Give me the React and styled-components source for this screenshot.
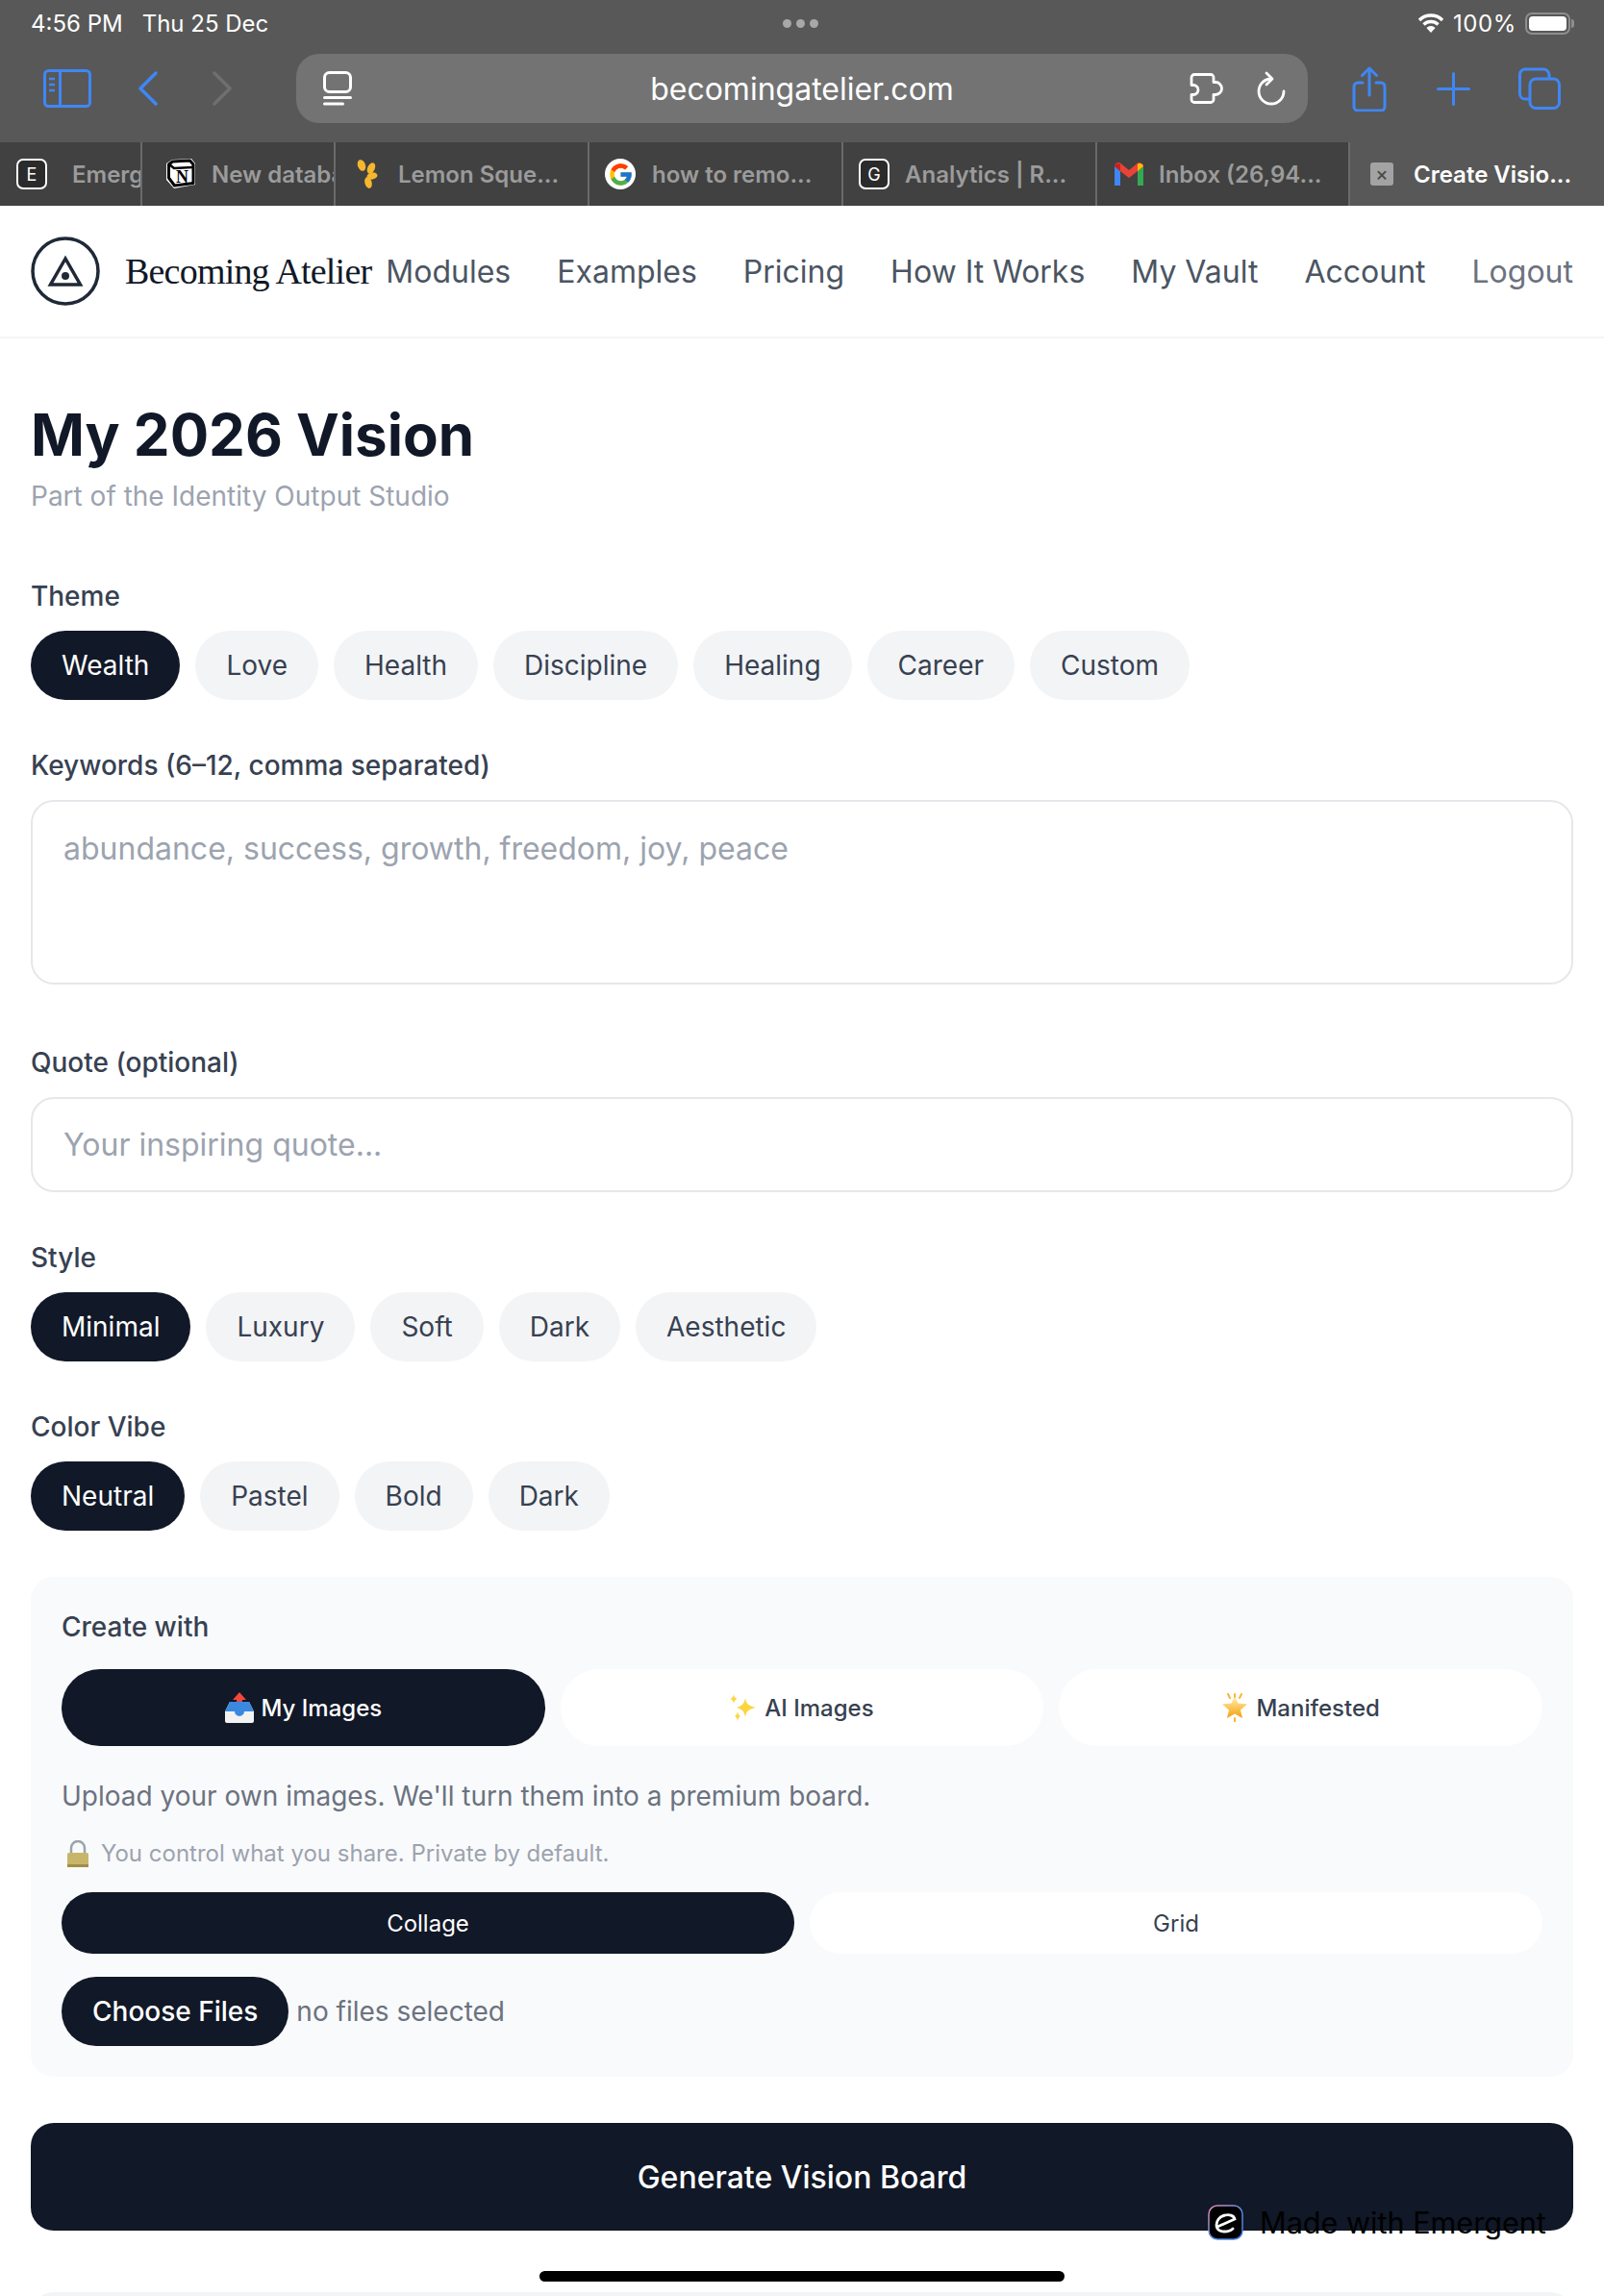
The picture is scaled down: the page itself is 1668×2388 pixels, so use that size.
import React from "react";
import styled, { createGlobalStyle } from "styled-components";
import { FcGoogle } from "react-icons/fc";

const Global = createGlobalStyle`
    * { box-sizing: border-box; }
    html, body { margin: 0; padding: 0; background: #fff; }
    body { font-family: Inter, "Liberation Sans", sans-serif; }
`

const Screen = styled.div`
    position: relative;
    width: 1668px;
    height: 2388px;
    overflow: hidden;
    background: #fff;
`

/* safari chrome */
const Chrome = styled.div`
    background: #585858;
    height: 148px;
`
const StatusBar = styled.div`
    display: grid;
    grid-template-columns: 1fr auto 1fr;
    align-items: center;
    height: 48px;
    padding: 0 35px 0 32px;
    color: #fff;
    font-size: 24px;
`
const StatusLeft = styled.div`
    display: flex;
    gap: 20px;
`
const StatusRight = styled.div`
    display: flex;
    align-items: center;
    justify-content: flex-end;
    gap: 9px;
`
const BatteryLevel = styled.span`
    letter-spacing: 0.6px;
`
const Dots = styled.div`
    display: flex;
    gap: 5px;
    i {
        width: 9px;
        height: 9px;
        border-radius: 50%;
        background: #a8a8a8;
    }
`
const Battery = styled.div`
    position: relative;
    width: 47px;
    height: 23px;
    border: 2px solid #8e8e8e;
    border-radius: 7px;
    padding: 2px;
    &::before {
        content: "";
        display: block;
        height: 100%;
        border-radius: 4px;
        background: #fff;
    }
    &::after {
        content: "";
        position: absolute;
        right: -6px;
        top: 5px;
        width: 3px;
        height: 9px;
        border-radius: 0 3px 3px 0;
        background: #8e8e8e;
    }
`
const ToolRow = styled.div`
    display: flex;
    align-items: center;
    height: 72px;
    margin-top: 8px;
    padding-left: 45px;
`
const Tool = styled.span`
    display: flex;
    flex: none;
    margin-left: ${p => p.$gap || 0}px;
`
const UrlBar = styled.div`
    display: grid;
    grid-template-columns: 1fr auto 1fr;
    align-items: center;
    flex: none;
    width: 1052px;
    height: 72px;
    margin-left: 67px;
    padding: 0 23px;
    border-radius: 24px;
    background: #737373;
    color: #fff;
    font-size: 32px;
`
const UrlActions = styled.div`
    display: flex;
    justify-content: flex-end;
    align-items: center;
    gap: 29px;
`
const TabBar = styled.div`
    display: flex;
    height: 66px;
    background: #414141;
`
const Tab = styled.div`
    display: flex;
    align-items: center;
    flex: none;
    width: ${p => p.$w}px;
    padding-left: ${p => p.$pad}px;
    border-right: ${p => p.$active ? "none" : "2px solid #6a6a6a"};
    background: ${p => p.$active ? "#585858" : "transparent"};
    overflow: hidden;
`
const TabIcon = styled.span`
    display: flex;
    align-items: center;
    justify-content: center;
    flex: none;
    width: ${p => p.$w || 32}px;
    margin-right: ${p => p.$gap}px;
`
const TabTitle = styled.span`
    padding-top: 1px;
    color: ${p => p.$active ? "#fff" : "#9b9b9b"};
    font-size: 24px;
    font-weight: 600;
    white-space: nowrap;
`
const SquareFav = styled.span`
    display: flex;
    align-items: center;
    justify-content: center;
    width: 32px;
    height: 32px;
    border: 2px solid #fff;
    border-radius: 7px;
    background: #2b2b2b;
    color: #fff;
    font-size: 18px;
`
const GoogleFav = styled.span`
    display: flex;
    align-items: center;
    justify-content: center;
    width: 32px;
    height: 32px;
    border-radius: 50%;
    background: #fff;
`
const CloseFav = styled.span`
    display: flex;
    align-items: center;
    justify-content: center;
    width: 24px;
    height: 24px;
    border-radius: 3px;
    background: #a3a3a3;
    color: #4a4a4a;
    font-size: 20px;
    font-weight: 500;
`

/* site header */
const Header = styled.header`
    display: flex;
    align-items: center;
    justify-content: space-between;
    height: 138px;
    padding: 0 32px;
    border-bottom: 2px solid #f3f4f6;
`
const Brand = styled.div`
    display: flex;
    align-items: center;
    flex: none;
    gap: 26px;
`
const BrandName = styled.span`
    color: #111827;
    font-family: "Liberation Serif", serif;
    font-size: 38px;
    letter-spacing: -0.8px;
    white-space: nowrap;
`
const Nav = styled.nav`
    display: flex;
    gap: 48px;
`
const NavLink = styled.a`
    padding-top: 2px;
    color: ${p => p.$muted ? "#6b7280" : "#4b5563"};
    font-size: 32px;
    line-height: 48px;
    white-space: nowrap;
`

/* form */
const Main = styled.main`
    padding: 64px 32px 0;
`
const Title = styled.h1`
    margin: 0;
    color: #111827;
    font-size: 60px;
    font-weight: 700;
    line-height: 72px;
`
const Subtitle = styled.p`
    margin: 8px 0 64px;
    color: #9ca3af;
    font-size: 28px;
    line-height: 40px;
`
const Field = styled.section`
    margin-bottom: ${p => p.$after || 48}px;
`
const Label = styled.div`
    margin-bottom: ${p => p.$after || 16}px;
    color: #374151;
    font-size: 28px;
    font-weight: 500;
    line-height: 40px;
`
const Chips = styled.div`
    display: flex;
    gap: 16px;
`
const Chip = styled.div`
    display: flex;
    align-items: center;
    height: 72px;
    padding: 0 32px;
    border-radius: 36px;
    background: ${p => p.$on ? "#111827" : "#f3f4f6"};
    color: ${p => p.$on ? "#fff" : "#374151"};
    font-size: 28px;
`
const TextBox = styled.div`
    height: ${p => p.$h}px;
    padding: ${p => p.$top}px 32px 0;
    border: 2px solid #e5e7eb;
    border-radius: 24px;
    color: #9ca3af;
    font-size: 32px;
    line-height: 48px;
`
const Panel = styled.section`
    margin-bottom: 48px;
    padding: 32px;
    border-radius: 24px;
    background: #f9fafb;
`
const ModeGrid = styled.div`
    display: grid;
    grid-template-columns: repeat(${p => p.$cols}, 1fr);
    gap: 16px;
`
const ModeButton = styled.div`
    display: flex;
    align-items: center;
    justify-content: center;
    gap: 8px;
    height: ${p => p.$h}px;
    border-radius: ${p => p.$h / 2}px;
    background: ${p => p.$on ? "#111827" : "#fff"};
    color: ${p => p.$on ? "#fff" : "#374151"};
    font-size: 24px;
    font-weight: ${p => p.$h === 80 ? 500 : 400};
`
const Hint = styled.p`
    margin: 32px 0 24px;
    color: #6b7280;
    font-size: 28px;
    line-height: 40px;
`
const Privacy = styled.p`
    display: flex;
    align-items: center;
    gap: 12px;
    margin: 0 0 24px;
    padding-left: 5px;
    color: #9ca3af;
    font-size: 24px;
    line-height: 32px;
`
const FileRow = styled.div`
    display: flex;
    align-items: center;
    gap: 8px;
    margin-top: 24px;
`
const FileButton = styled.div`
    display: flex;
    align-items: center;
    height: 72px;
    padding: 0 32px;
    border-radius: 36px;
    background: #111827;
    color: #fff;
    font-size: 28px;
    font-weight: 500;
`
const FileNote = styled.span`
    color: #6b7280;
    font-size: 28px;
`
const Generate = styled.div`
    display: flex;
    align-items: center;
    justify-content: center;
    height: 112px;
    margin-bottom: 64px;
    border-radius: 24px;
    background: #111827;
    color: #fff;
    font-size: 32px;
    font-weight: 500;
`
const NextCard = styled.div`
    height: 60px;
    border-radius: 24px 24px 0 0;
    background: #f3f4f6;
`

/* overlays */
const HomeBar = styled.div`
    position: absolute;
    left: 561px;
    top: 2362px;
    width: 546px;
    height: 11px;
    border-radius: 6px;
    background: #000;
`
const MadeWith = styled.div`
    position: absolute;
    left: 1256px;
    top: 2293px;
    display: flex;
    align-items: center;
    gap: 17px;
    color: #000;
    font-size: 30.6px;
    line-height: 37px;
    white-space: nowrap;
`

const Blue = "#3f87f5"

const SidebarIcon = () =>
    <svg width="50" height="40" viewBox="0 0 50 40" fill="none" stroke={Blue} strokeWidth="3">
        <rect x="1.5" y="1.5" width="47" height="37" rx="4" />
        <path d="M17.5 2v36" />
        <path d="M6 10h6M6 16h6M6 22h6" strokeWidth="2.5" />
    </svg>

const Chevron = ({ color, flip }) =>
    <svg width="20" height="36" viewBox="0 0 20 36" fill="none" stroke={color} strokeWidth="3.5" strokeLinecap="round" strokeLinejoin="round">
        <path d={flip ? "M2 2l16 16-16 16" : "M18 2L2 18l16 16"} />
    </svg>

const ReaderIcon = () =>
    <svg width="30" height="36" viewBox="0 0 30 36" fill="none" stroke="#fff" strokeWidth="3" strokeLinecap="round">
        <rect x="1.5" y="1.5" width="27" height="20" rx="5" />
        <path d="M1.5 27.5h27M1.5 34h19" />
    </svg>

const ExtensionIcon = () =>
    <svg width="41" height="32" viewBox="0 0 41 32" fill="none" stroke="#fff" strokeWidth="2.8" strokeLinejoin="round">
        <path d="M5 1.5h17a3 3 0 0 1 3 3v5h2a6.5 6.5 0 0 1 0 13h-2v5a3 3 0 0 1-3 3H5a3 3 0 0 1-3-3v-5h2a5 5 0 0 0 0-10H2V4.5a3 3 0 0 1 3-3z" />
    </svg>

const ReloadIcon = () =>
    <svg width="30" height="36" viewBox="0 0 30 36" fill="none" stroke="#fff" strokeWidth="2.8" strokeLinecap="round" strokeLinejoin="round">
        <path d="M15 8A13 13 0 1 0 28 21" />
        <path d="M10 2l6 6-6 6" />
    </svg>

const ShareIcon = () =>
    <svg width="36" height="47" viewBox="0 0 36 47" fill="none" stroke={Blue} strokeWidth="3" strokeLinecap="round" strokeLinejoin="round">
        <path d="M11 17H6a4 4 0 0 0-4 4v21a4 4 0 0 0 4 4h24a4 4 0 0 0 4-4V21a4 4 0 0 0-4-4h-5" />
        <path d="M18 30V2M10.500 9.500L18 2l7.500 7.500" />
    </svg>

const PlusIcon = () =>
    <svg width="35" height="35" viewBox="0 0 35 35" stroke={Blue} strokeWidth="3" strokeLinecap="round">
        <path d="M17.5 1.5v32M1.5 17.5h32" />
    </svg>

const TabsIcon = () =>
    <svg width="44" height="44" viewBox="0 0 44 44" fill="none" stroke={Blue} strokeWidth="3">
        <rect x="12" y="12" width="30.5" height="30.5" rx="6" />
        <path d="M12 33H7a5.500 5.500 0 0 1-5.500-5.500v-20A5.500 5.500 0 0 1 7 2h19a6 6 0 0 1 6 6v4" />
    </svg>

const WifiIcon = () =>
    <svg width="28" height="22" viewBox="0 0 28 22" fill="none" stroke="#fff" strokeWidth="3.4">
        <path d="M2 8a17 17 0 0 1 24 0M6.500 12.500a11 11 0 0 1 15 0" />
        <path d="M14 21l-4.600-5a6.500 6.500 0 0 1 9.200 0z" fill="#fff" stroke="none" />
    </svg>

const NotionFav = () =>
    <svg width="32" height="32" viewBox="0 0 32 32">
        <path d="M7 1l20-1 4 5v22l-22 4-8-9V5z" fill="#fff" />
        <path d="M7.500 3l18-1 3.500 4v19.500L9.500 28 3.500 20V6z" fill="#fff" stroke="#000" strokeWidth="3" strokeLinejoin="round" />
        <path d="M4 6l5 4 19-1" fill="none" stroke="#000" strokeWidth="2.500" />
        <text x="17.500" y="25" textAnchor="middle" fontFamily="Liberation Serif, serif" fontWeight="700" fontSize="18" fill="#000">N</text>
    </svg>

const LemonFav = () =>
    <svg width="22" height="30" viewBox="0 0 22 30" fill="#f6b62e">
        <ellipse cx="5" cy="6" rx="4" ry="6" transform="rotate(-20 5 6)" />
        <ellipse cx="15" cy="9" rx="3.800" ry="6" transform="rotate(25 15 9)" />
        <ellipse cx="16" cy="17" rx="3.600" ry="5.500" transform="rotate(80 16 17)" />
        <ellipse cx="12" cy="24" rx="3.600" ry="6" transform="rotate(-15 12 24)" />
    </svg>

const GmailFav = () =>
    <svg width="30" height="24" viewBox="0 0 30 24">
        <path d="M0 4v20h6V9z" fill="#4285f4" />
        <path d="M24 9v15h6V4z" fill="#34a853" />
        <path d="M0 4a4 4 0 0 1 6.500-3L15 8l8.500-7A4 4 0 0 1 30 4l-6 5-9 7-9-7z" fill="#ea4335" />
        <path d="M24 9V1.500A4 4 0 0 1 30 4z" fill="#fbbc04" />
        <path d="M0 4a4 4 0 0 1 6-2.500V9z" fill="#c5221f" />
    </svg>

const LogoMark = () =>
    <svg width="72" height="72" viewBox="0 0 72 72" fill="none" stroke="#1f2937" strokeWidth="3.5">
        <circle cx="36" cy="36" r="34" />
        <path d="M36 23L20.500 50h31z" />
        <circle cx="36" cy="41" r="4" fill="#1f2937" stroke="none" />
    </svg>

const TrayEmoji = () =>
    <svg width="30" height="32" viewBox="0 0 30 32">
        <path d="M15 0l7 8h-4v7h-6V8H8z" fill="#f0483e" />
        <path d="M5 10h20l5 10v10a2 2 0 0 1-2 2H2a2 2 0 0 1-2-2V20z" fill="#f2f2f2" />
        <path d="M5 10h20l5 10H20a5 5 0 0 1-10 0H0z" fill="#3b88e0" />
    </svg>

const Sparkles = () =>
    <svg width="28" height="28" viewBox="0 0 28 28" fill="#fcd53f">
        <path d="M16 4c1 6 3 8 11 10-8 2-10 4-11 10-1-6-3-8-9-10 6-2 8-4 9-10z" />
        <path d="M4 0c.500 3 1.500 4 3.500 5-2 1-3 2-3.500 5-.500-3-1.500-4-3.500-5 2-1 3-2 3.500-5z" />
        <path d="M8 18c.500 3 1.500 4 3 5-1.500 1-2.500 2-3 5-.500-3-1.500-4-3-5 1.500-1 2.500-2 3-5z" />
    </svg>

const GlowingStar = () =>
    <svg width="28" height="30" viewBox="0 0 28 30">
        <defs>
            <linearGradient id="glow" x1="0" y1="0" x2="0" y2="1">
                <stop offset="0" stopColor="#fff3b0" />
                <stop offset="1" stopColor="#f59e0b" />
            </linearGradient>
        </defs>
        <path d="M14 3l3.500 7.500 9.500 1-7 6 2 8.500-8-4.500L6 26l2-8.500-7-6 9.500-1z" fill="url(#glow)" />
        <path d="M7 1l2 4M21 1l-2 4M14 1v3M14 26v4" stroke="#f7b733" strokeWidth="2" strokeLinecap="round" />
    </svg>

const LockEmoji = () =>
    <svg width="24" height="28" viewBox="0 0 24 28">
        <path d="M5 14V8a7 7 0 0 1 14 0v6" fill="none" stroke="#9aa3ad" strokeWidth="2.500" />
        <rect x="1" y="13" width="22" height="15" rx="1.500" fill="#c9b56a" />
        <rect x="1" y="25" width="22" height="3" fill="#a18d45" />
    </svg>

const EmergentBadge = () =>
    <svg width="37" height="37" viewBox="0 0 37 37" fill="none">
        <defs>
            <linearGradient id="rim" x1="0" y1="0" x2="1" y2="1">
                <stop offset="0" stopColor="#f08ab0" />
                <stop offset="0.5" stopColor="#5f8fe8" />
                <stop offset="1" stopColor="#3f7be0" />
            </linearGradient>
        </defs>
        <rect x="1" y="1" width="35" height="35" rx="9" fill="#000" stroke="url(#rim)" strokeWidth="1.500" />
        <path d="M10 23L28 15C27 11 22 10 18 11C12 12 9 17 9 21C9 26 13 28 17 28C21 28 24 27 26 25" stroke="#fff" strokeWidth="2.800" strokeLinecap="round" />
    </svg>

const tabs = [
    { w: 148, pad: 17, gap: 26, title: "Emerg", icon: <SquareFav>E</SquareFav> },
    { w: 201, pad: 24, gap: 16, title: "New database", icon: <NotionFav /> },
    { w: 264, pad: 22, gap: 21, iconW: 22, title: "Lemon Sque...", icon: <LemonFav /> },
    { w: 264, pad: 16, gap: 17, title: "how to remo...", icon: <GoogleFav><FcGoogle size={27} /></GoogleFav> },
    { w: 264, pad: 16, gap: 16, title: "Analytics | R...", icon: <SquareFav>G</SquareFav> },
    { w: 263, pad: 17, gap: 15, title: "Inbox (26,94...", icon: <GmailFav /> },
]

const navLinks = ["Modules", "Examples", "Pricing", "How It Works", "My Vault", "Account"]
const themes = ["Wealth", "Love", "Health", "Discipline", "Healing", "Career", "Custom"]
const styles = ["Minimal", "Luxury", "Soft", "Dark", "Aesthetic"]
const vibes = ["Neutral", "Pastel", "Bold", "Dark"]

const ChipRow = ({ items }) =>
    <Chips>
        {items.map((item, i) => <Chip key={item} $on={i === 0}>{item}</Chip>)}
    </Chips>

const App = () =>
    <Screen>
        <Global />
        <Chrome>
            <StatusBar>
                <StatusLeft><span>4:56 PM</span><span>Thu 25 Dec</span></StatusLeft>
                <Dots><i /><i /><i /></Dots>
                <StatusRight><WifiIcon /><BatteryLevel>100%</BatteryLevel><Battery /></StatusRight>
            </StatusBar>
            <ToolRow>
                <Tool><SidebarIcon /></Tool>
                <Tool $gap={49}><Chevron color={Blue} /></Tool>
                <Tool $gap={57}><Chevron color="#6f6f6f" flip /></Tool>
                <UrlBar>
                    <Tool $gap={5}><ReaderIcon /></Tool>
                    <span>becomingatelier.com</span>
                    <UrlActions><ExtensionIcon /><ReloadIcon /></UrlActions>
                </UrlBar>
                <Tool $gap={46}><ShareIcon /></Tool>
                <Tool $gap={52}><PlusIcon /></Tool>
                <Tool $gap={50}><TabsIcon /></Tool>
            </ToolRow>
        </Chrome>
        <TabBar>
            {tabs.map(t =>
                <Tab key={t.title} $w={t.w} $pad={t.pad}>
                    <TabIcon $w={t.iconW} $gap={t.gap}>{t.icon}</TabIcon>
                    <TabTitle>{t.title}</TabTitle>
                </Tab>
            )}
            <Tab $active $w={264} $pad={21}>
                <TabIcon $w={24} $gap={21}><CloseFav>×</CloseFav></TabIcon>
                <TabTitle $active>Create Visio...</TabTitle>
            </Tab>
        </TabBar>
        <Header>
            <Brand>
                <LogoMark />
                <BrandName>Becoming Atelier</BrandName>
            </Brand>
            <Nav>
                {navLinks.map(link => <NavLink key={link}>{link}</NavLink>)}
                <NavLink $muted>Logout</NavLink>
            </Nav>
        </Header>
        <Main>
            <Title>My 2026 Vision</Title>
            <Subtitle>Part of the Identity Output Studio</Subtitle>
            <Field>
                <Label>Theme</Label>
                <ChipRow items={themes} />
            </Field>
            <Field $after={61}>
                <Label>Keywords (6–12, comma separated)</Label>
                <TextBox $h={192} $top={25}>abundance, success, growth, freedom, joy, peace</TextBox>
            </Field>
            <Field>
                <Label>Quote (optional)</Label>
                <TextBox $h={99} $top={24}>Your inspiring quote...</TextBox>
            </Field>
            <Field>
                <Label>Style</Label>
                <ChipRow items={styles} />
            </Field>
            <Field>
                <Label>Color Vibe</Label>
                <ChipRow items={vibes} />
            </Field>
            <Panel>
                <Label $after={24}>Create with</Label>
                <ModeGrid $cols={3}>
                    <ModeButton $h={80} $on><TrayEmoji />My Images</ModeButton>
                    <ModeButton $h={80}><Sparkles />AI Images</ModeButton>
                    <ModeButton $h={80}><GlowingStar />Manifested</ModeButton>
                </ModeGrid>
                <Hint>Upload your own images. We'll turn them into a premium board.</Hint>
                <Privacy><LockEmoji />You control what you share. Private by default.</Privacy>
                <ModeGrid $cols={2}>
                    <ModeButton $h={64} $on>Collage</ModeButton>
                    <ModeButton $h={64}>Grid</ModeButton>
                </ModeGrid>
                <FileRow>
                    <FileButton>Choose Files</FileButton>
                    <FileNote>no files selected</FileNote>
                </FileRow>
            </Panel>
            <Generate>Generate Vision Board</Generate>
            <NextCard />
        </Main>
        <MadeWith><EmergentBadge />Made with Emergent</MadeWith>
        <HomeBar />
    </Screen>

export default App
